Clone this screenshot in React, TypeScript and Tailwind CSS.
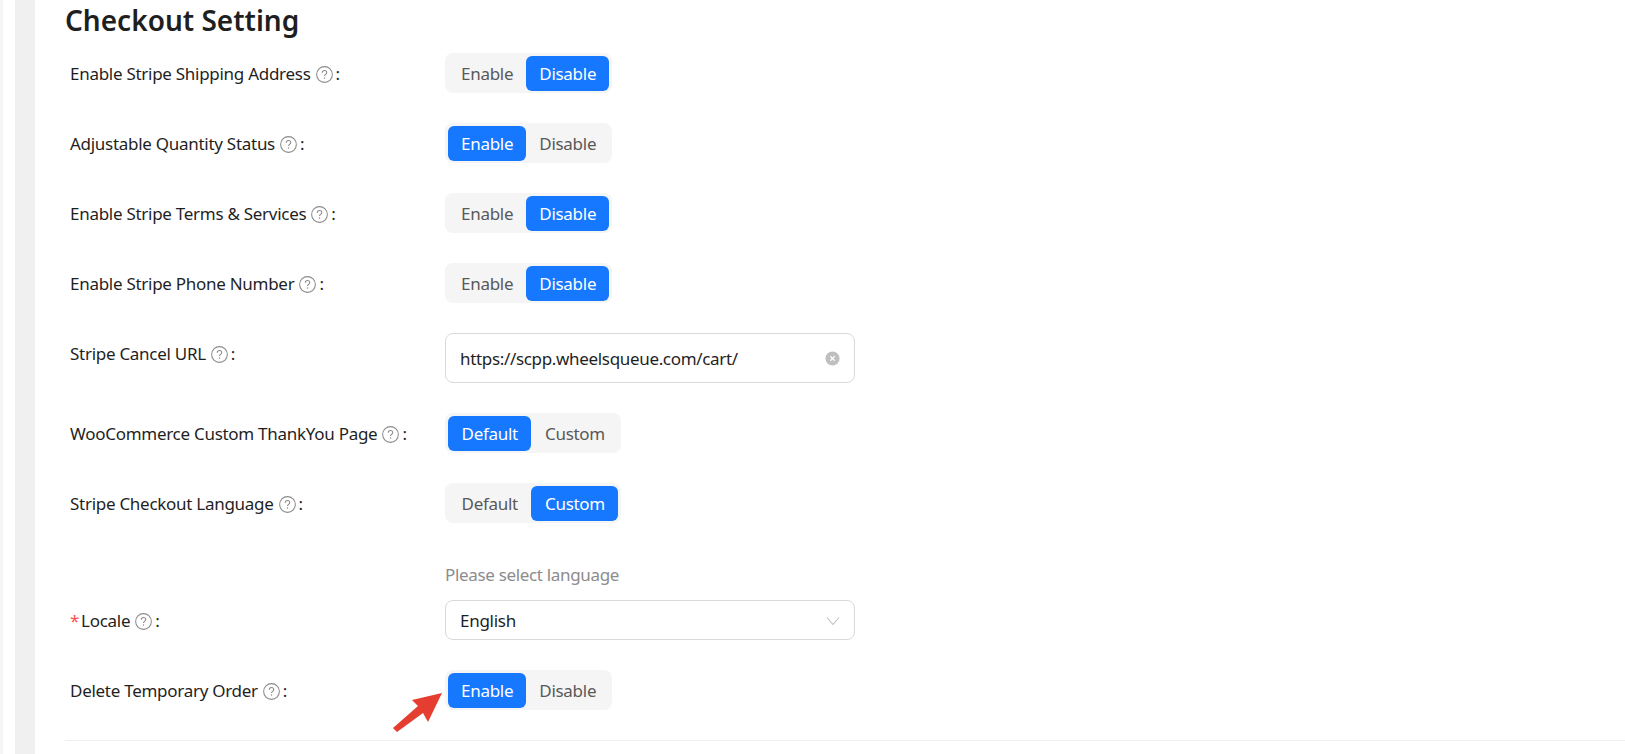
import React from "react";

function Help() {
  return (
    <svg viewBox="0 0 16 16" className="w-[17px] h-[17px] ml-[5px] shrink-0 text-[#8c8c8c]" fill="none" stroke="currentColor">
      <circle cx="8" cy="8" r="7.4" strokeWidth="1" />
      <path d="M5.9 6.3c0-1.2 1-2 2.1-2s2.1.8 2.1 1.9c0 1.7-2.1 1.7-2.1 3.3" strokeWidth="1" />
      <circle cx="8" cy="11.4" r=".7" fill="currentColor" stroke="none" />
    </svg>
  );
}

function Label({ text, required }: { text: string; required?: boolean }) {
  return (
    <div className="w-[375px] shrink-0 flex items-center pt-[2px] text-[17px] tracking-[-0.28px] text-[#1f1f1f]">
      {required && <span className="text-[#ff4d4f] mr-[2px]">*</span>}
      <span>{text}</span>
      <Help />
      <span className="ml-[3px]">:</span>
    </div>
  );
}

function Segmented({ options, active, wide }: { options: [string, string]; active: number; wide?: boolean }) {
  return (
    <div className="inline-flex h-10 items-center p-[3px] rounded-lg bg-[#f5f5f5] text-[17px] tracking-[-0.28px]">
      {options.map((o, i) => (
        <div
          key={o}
          className={
            "h-[35px] flex items-center pt-[2px] rounded-md " +
            (wide ? "px-[13.5px] " : "px-[13px] ") +
            (i === active ? "bg-[#1677ff] text-white" : "text-[#595959]")
          }
        >
          {o}
        </div>
      ))}
    </div>
  );
}

function SegRow({ label, options, active, cls, wide }: { label: string; options: [string, string]; active: number; cls: string; wide?: boolean }) {
  return (
    <div className={"flex items-center h-10 " + cls}>
      <Label text={label} />
      <Segmented options={options} active={active} wide={wide} />
    </div>
  );
}

const ED: [string, string] = ["Enable", "Disable"];
const DC: [string, string] = ["Default", "Custom"];

export default function App() {
  return (
    <div className="h-[754px] overflow-hidden bg-white flex font-['Noto_Sans','Open_Sans',sans-serif]">
      <div className="w-[3px] bg-[#f5f5f5]" />
      <div className="w-[12px]" />
      <div className="w-[20px] bg-[#f0f0f0]" />
      <div className="flex-1 pl-[30px] relative">
        <h1 className="text-[28px] leading-[40px] font-semibold text-[#1f1f1f] h-[42px]">Checkout Setting</h1>
        <div className="pl-[5px] mt-[11px]">
          <SegRow label="Enable Stripe Shipping Address" options={ED} active={1} cls="" />
          <SegRow label="Adjustable Quantity Status" options={ED} active={0} cls="mt-[30px]" />
          <SegRow label="Enable Stripe Terms & Services" options={ED} active={1} cls="mt-[30px]" />
          <SegRow label="Enable Stripe Phone Number" options={ED} active={1} cls="mt-[30px]" />
          <div className="flex mt-[30px]">
            <div className="h-10 flex items-center">
              <Label text="Stripe Cancel URL" />
            </div>
            <div className="w-[410px] h-[50px] border border-[#d9d9d9] rounded-lg flex items-center px-[14px] pt-[1px] text-[17px] tracking-[-0.33px] text-[#1f1f1f]">
              <span className="flex-1">https://scpp.wheelsqueue.com/cart/</span>
              <svg viewBox="0 0 16 16" className="w-[15px] h-[15px]">
                <circle cx="8" cy="8" r="7.5" fill="#bfbfbf" />
                <path d="M5.6 5.6l4.8 4.8M10.4 5.6l-4.8 4.8" stroke="#fff" strokeWidth="1.3" />
              </svg>
            </div>
          </div>
          <SegRow label="WooCommerce Custom ThankYou Page" options={DC} active={0} cls="mt-[30px]" wide />
          <SegRow label="Stripe Checkout Language" options={DC} active={1} cls="mt-[30px]" wide />
          <div className="ml-[375px] mt-[39px] h-[26px] leading-[26px] text-[17px] tracking-[-0.33px] text-[#8c8c8c]">Please select language</div>
          <div className="flex items-center mt-[12px]">
            <Label text="Locale" required />
            <div className="w-[410px] h-10 border border-[#d9d9d9] rounded-lg flex items-center px-[14px] pt-[1px] text-[17px] tracking-[-0.28px] text-[#1f1f1f]">
              <span className="flex-1">English</span>
              <svg viewBox="0 0 14 10" className="w-[14px] h-[10px]" fill="none" stroke="#bfbfbf" strokeWidth="1.1">
                <path d="M1 1.5l6 7 6-7" />
              </svg>
            </div>
          </div>
          <SegRow label="Delete Temporary Order" options={ED} active={0} cls="mt-[30px]" />
        </div>
        <div className="absolute left-[30px] right-0 top-[740px] h-px bg-[#f0f0f0]" />
        <svg className="absolute left-[355px] top-[690px] w-[55px] h-[45px]" viewBox="0 0 55 45">
          <path d="M52 3L22 10l6 6L3 38l4 4 26-19 5 9z" fill="#e53e30" />
        </svg>
      </div>
    </div>
  );
}
